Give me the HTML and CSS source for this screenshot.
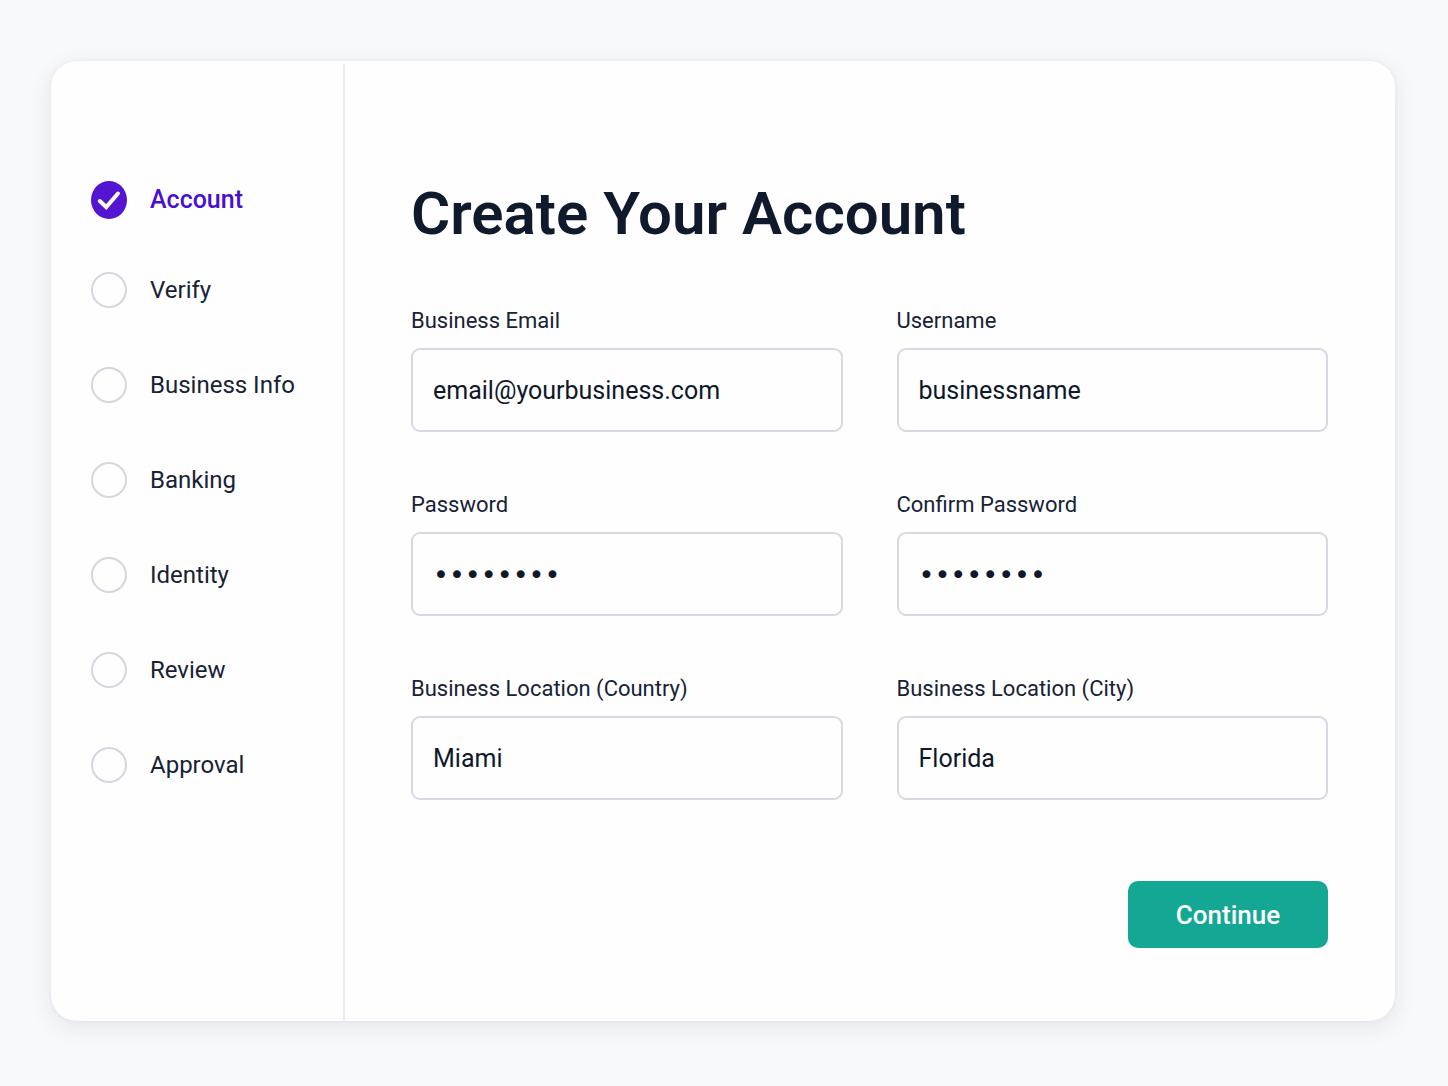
FILE: index.html
```
<!DOCTYPE html>
<html lang="en">
<head>
    <meta charset="UTF-8">
    <meta name="viewport" content="width=device-width, initial-scale=1.0">
    <title>Create Your Account</title>
    <link rel="stylesheet" href="styles.css">
</head>
<body>
    <div class="card">
        <nav class="sidebar" aria-label="Progress">
            <ol class="steps">
                <li class="step active" aria-current="step">
                    <svg class="check" viewBox="0 0 36 38" aria-hidden="true">
                        <ellipse cx="18" cy="19" rx="18" ry="19" fill="#5415d3"/>
                        <path d="M8.8 20 L15.2 26 L27 12.5" fill="none" stroke="#fff" stroke-width="4" stroke-linecap="round" stroke-linejoin="miter"/>
                    </svg>
                    <span>Account</span>
                </li>
                <li class="step"><span class="circle"></span><span>Verify</span></li>
                <li class="step"><span class="circle"></span><span>Business Info</span></li>
                <li class="step"><span class="circle"></span><span>Banking</span></li>
                <li class="step"><span class="circle"></span><span>Identity</span></li>
                <li class="step"><span class="circle"></span><span>Review</span></li>
                <li class="step"><span class="circle"></span><span>Approval</span></li>
            </ol>
        </nav>

        <main class="content">
            <h1>Create Your Account</h1>
            <form>
                <div class="fields">
                    <div class="field">
                        <label for="email">Business Email</label>
                        <input type="email" id="email" value="email@yourbusiness.com">
                    </div>
                    <div class="field">
                        <label for="username">Username</label>
                        <input type="text" id="username" value="businessname">
                    </div>
                    <div class="field">
                        <label for="password">Password</label>
                        <input type="password" id="password" value="password">
                    </div>
                    <div class="field">
                        <label for="confirm">Confirm Password</label>
                        <input type="password" id="confirm" value="password">
                    </div>
                    <div class="field">
                        <label for="country">Business Location (Country)</label>
                        <input type="text" id="country" value="Miami">
                    </div>
                    <div class="field">
                        <label for="city">Business Location (City)</label>
                        <input type="text" id="city" value="Florida">
                    </div>
                </div>
                <div class="actions">
                    <button type="submit" class="continue">Continue</button>
                </div>
            </form>
        </main>
    </div>
</body>
</html>
```
FILE: styles.css
```
* {
    box-sizing: border-box;
}
body {
    margin: 0;
    min-height: 100vh;
    padding: 61px 53px 65px 51px;
    display: flex;
    background-color: #f8f9fb;
    font-family: Roboto, "Liberation Sans", sans-serif;
    color: #172235;
}
.card {
    flex: 1;
    display: flex;
    background-color: #fefefe;
    border-radius: 26px;
    box-shadow: 0 6px 24px rgba(30, 35, 70, 0.09), 0 0 4px rgba(30, 35, 70, 0.06);
}

/* Steps */
.sidebar {
    flex: 0 0 294px;
    margin-top: 3px;
    padding: 117px 20px 40px 40px;
    border-right: 2px solid #ebecf0;
}
.steps {
    margin: 0;
    padding: 0;
    list-style: none;
}
.step {
    display: flex;
    align-items: center;
    gap: 23px;
    height: 36px;
    margin-bottom: 59px;
    font-size: 24px;
    line-height: 36px;
}
.step.active {
    height: 38px;
    margin-bottom: 53px;
    font-size: 25px;
    font-weight: 500;
    color: #4a0fd0;
}
.check {
    flex: none;
    width: 36px;
    height: 38px;
}
.circle {
    flex: none;
    width: 36px;
    height: 36px;
    border: 2px solid #d5d7df;
    border-radius: 50%;
}

/* Form */
.content {
    flex: 1;
    padding: 116px 67px 72px 66px;
}
h1 {
    margin: 0 0 54px;
    font-size: 60px;
    line-height: 74px;
    font-weight: 600;
    color: #0f1a2c;
}
.fields {
    display: grid;
    grid-template-columns: 1fr 1fr;
    gap: 57px 54px;
}
.field {
    display: flex;
    flex-direction: column;
    gap: 12px;
}
.field label {
    font-size: 22px;
    line-height: 31px;
}
.field input {
    width: 100%;
    height: 84px;
    padding: 0 20px;
    border: 2px solid #d6d9e2;
    border-radius: 9px;
    background-color: #fefefe;
    font-family: inherit;
    font-size: 25px;
    color: #0f172a;
}
.field input[type="password"] {
    font-family: "DejaVu Sans", sans-serif;
    font-size: 27px;
}
.field input:focus {
    outline: none;
    border-color: #5415d3;
}
.actions {
    display: flex;
    justify-content: flex-end;
    margin-top: 81px;
}
.continue {
    width: 200px;
    height: 67px;
    border: none;
    border-radius: 10px;
    background-color: #14a794;
    font-family: inherit;
    font-size: 26px;
    font-weight: 500;
    color: #fff;
    cursor: pointer;
}
```
